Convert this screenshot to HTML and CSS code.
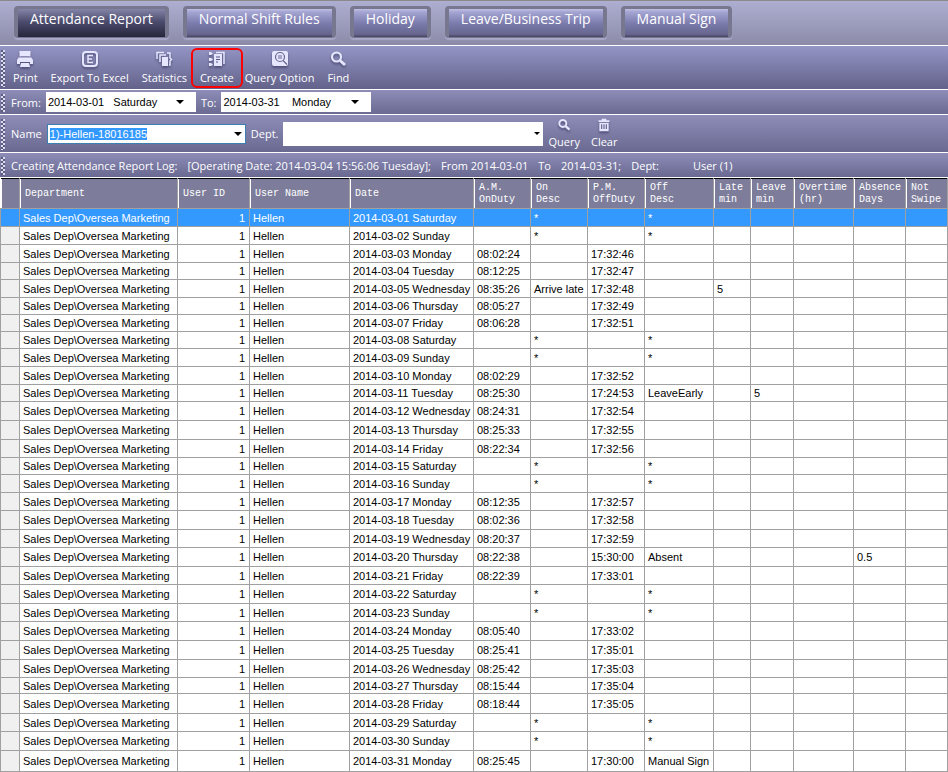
FILE: index.html
```html
<!DOCTYPE html>
<html lang="en">
<head>
  <meta charset="UTF-8">
  <title>Attendance Report</title>
  <meta name="viewport" content="width=device-width, initial-scale=1">
  <link rel="stylesheet" href="styles.css">
</head>
<body>
  <nav class="tabs">
    <button type="button" class="tab active">Attendance Report</button>
    <button type="button" class="tab">Normal Shift Rules</button>
    <button type="button" class="tab">Holiday</button>
    <button type="button" class="tab">Leave/Business Trip</button>
    <button type="button" class="tab">Manual Sign</button>
  </nav>

  <div class="bar toolbar">
    <button type="button" class="tool">
      <svg class="icon" viewBox="0 0 18 18"><path d="M4 1h10v5H4z"/><path d="M3 7h12l2 3v4h-3v-2H4v2H1v-4z"/><path d="M5 13h8l1 4H4z"/><path d="M4 1v6h10V1" fill="none" stroke="#e6e6ff"/><path d="M3 7h12" stroke="#7d7da8"/></svg>
      Print
    </button>
    <button type="button" class="tool">
      <svg class="icon" viewBox="0 0 18 18"><rect x="2" y="2" width="14" height="14" rx="3" fill="none" stroke="#e6e6ff" stroke-width="2"/><path d="M12 5.500H7v7h5M7 9h4" fill="none" stroke="#e6e6ff" stroke-width="1.500"/></svg>
      Export To Excel
    </button>
    <button type="button" class="tool">
      <svg class="icon" viewBox="0 0 18 18"><path d="M2 9V2.500h7M5 12V5h6" fill="none" stroke="#e6e6ff" stroke-width="1.500"/><path d="M7 7h6v9H7z"/><path d="M12 3h3v5l1.500 1.500L15 11v4h-1" fill="none" stroke="#e6e6ff" stroke-width="1.500"/></svg>
      Statistics
    </button>
    <button type="button" class="tool marked">
      <svg class="icon" viewBox="0 0 18 18"><path d="M6 4h8v12H6z"/><path d="M8 2.500h8V14" fill="none" stroke="#e6e6ff" stroke-width="1.500"/><path d="M1 2h2l2 1.500L3 5H1zM1 8h2l2 1.500L3 11H1zM1 13h2l2 1.500L3 16H1z"/><path d="M8 7h4M8 9.500h4M8 12h2" stroke="#55558a"/></svg>
      Create
    </button>
    <button type="button" class="tool">
      <svg class="icon" viewBox="0 0 18 18"><rect x="1" y="1" width="16" height="15" rx="2"/><circle cx="9" cy="7" r="4.500" fill="none" stroke="#66668f" stroke-width="1.200"/><path d="M7 6h4M7 8h4M12 10.500l4 4" stroke="#66668f" stroke-width="1.200"/></svg>
      Query Option
    </button>
    <button type="button" class="tool">
      <svg class="icon" viewBox="0 0 18 18"><circle cx="7.500" cy="7" r="4.500" fill="none" stroke="#e6e6ff" stroke-width="2.200"/><path d="M11 10.500l5 4.500" stroke="#e6e6ff" stroke-width="3"/></svg>
      Find
    </button>
  </div>

  <div class="bar dates">
    <label for="from">From:</label>
    <select id="from" class="field date"><option>2014-03-01 &nbsp; Saturday</option></select>
    <label for="to">To:</label>
    <select id="to" class="field date"><option>2014-03-31 &nbsp; &nbsp;Monday</option></select>
  </div>

  <div class="bar search">
    <label for="name">Name</label>
    <input id="name" class="field person" type="text" value="1)-Hellen-18016185" role="combobox" aria-expanded="false">
    <label for="dept">Dept.</label>
    <select id="dept" class="field dept"><option></option></select>
    <div class="actions">
      <button type="button" class="tool small">
        <svg class="icon" viewBox="0 0 18 18"><circle cx="7.500" cy="7" r="4.500" fill="none" stroke="#e6e6ff" stroke-width="2.500"/><path d="M11 10.500l5 4.500" stroke="#e6e6ff" stroke-width="3"/></svg>
        Query
      </button>
      <button type="button" class="tool small">
        <svg class="icon" viewBox="0 0 18 18"><path d="M2 3h14v2H2zM6 1h6v2H6zM3 6h12v11H3z"/><path d="M6 8v6M9 8v6M12 8v6" stroke="#66668f" stroke-width="1.500"/></svg>
        Clear
      </button>
    </div>
  </div>

  <div class="bar log">
    <span>Creating Attendance Report Log:</span>
    <span>[Operating Date: 2014-03-04 15:56:06 Tuesday];</span>
    <span>From 2014-03-01</span>
    <span>To</span>
    <span>2014-03-31;</span>
    <span class="log-dept">Dept:</span>
    <span>User (1)</span>
  </div>

  <table class="report">
    <colgroup>
      <col class="c-mark"><col class="c-dept"><col class="c-id"><col class="c-name"><col class="c-date">
      <col class="c-time"><col class="c-time"><col class="c-time"><col class="c-off"><col class="c-late">
      <col class="c-leave"><col class="c-over"><col class="c-abs"><col>
    </colgroup>
    <thead>
      <tr>
        <th></th><th>Department</th><th>User ID</th><th>User Name</th><th>Date</th>
        <th>A.M.<br>OnDuty</th><th>On<br>Desc</th><th>P.M.<br>OffDuty</th><th>Off<br>Desc</th>
        <th>Late<br>min</th><th>Leave<br>min</th><th>Overtime<br>(hr)</th><th>Absence<br>Days</th><th>Not<br>Swipe</th>
      </tr>
    </thead>
    <tbody id="rows"></tbody>
  </table>
  <script src="script.js"></script>
</body>
</html>
```
FILE: styles.css
```css
body {
  margin: 0;
  background: #fff;
  font-family: "Open Sans", "Noto Sans", sans-serif;
  font-size: 11px;
  color: #fff;
}
button {
  font: inherit;
  color: inherit;
}

/* top tabs */
.tabs {
  display: flex;
  gap: 14px;
  height: 45px;
  box-sizing: border-box;
  padding: 5px 14px 0;
  border-top: 1px solid #8a8a8a;
  background: linear-gradient(#aeaed2, #8b8ba8);
}
.tab {
  height: 32px;
  padding: 0 12px 8px;
  border: 4px solid #77778f;
  border-top-width: 3px;
  border-bottom: 1px solid #77778f;
  border-radius: 4px;
  background: linear-gradient(#c0c0e4, #a6a6d4 10%, #7c7cae 50%, #66668f 90%, #44445f);
  box-shadow: 0 2px 1px #a8a8c8;
  font-size: 14px;
  line-height: 18px;
  white-space: nowrap;
}
.tab.active {
  background: linear-gradient(#8484a8, #4c4c6e 45%, #26263c);
}

/* tool bars */
.bar {
  display: flex;
  align-items: center;
  box-sizing: border-box;
  position: relative;
  padding-left: 11px;
  border-top: 1px solid #fff;
  background: linear-gradient(#8d8db8, #696991);
  white-space: nowrap;
}
/* dotted grip on the left of every bar */
.bar::before {
  content: "";
  position: absolute;
  left: 1px;
  top: 4px;
  bottom: 2px;
  width: 4px;
  background: repeating-conic-gradient(#dcdcf0 0 25%, #5c5c80 0 50%) 0 0 / 4px 4px;
}
.toolbar {
  height: 44px;
  gap: 13px;
  padding-left: 13px;
  background: linear-gradient(#9595c6, #62628a);
}
.tool {
  display: flex;
  flex-direction: column;
  align-items: center;
  gap: 2px;
  padding: 0;
  border: 0;
  background: none;
  line-height: 16px;
}
.icon {
  width: 18px;
  height: 18px;
  fill: #e6e6ff;
  filter: drop-shadow(0 2px 1px #50507a);
}
.small .icon {
  width: 14px;
  height: 14px;
}
.marked {
  margin: 0 -11px 0 -9px;
  padding: 0 7px;
  border: 2px solid #f00;
  border-radius: 6px;
}
.dates {
  height: 25px;
  gap: 5px;
}
.search {
  height: 38px;
  gap: 5px;
}
.actions {
  display: flex;
  gap: 11px;
}
.log {
  height: 26px;
  gap: 10px;
  border-bottom: 1px solid #fff;
}
.log-dept {
  margin-right: 24px;
}

/* fields */
.field {
  height: 20px;
  box-sizing: border-box;
  padding: 0 0 0 2px;
  border: 0;
  border-radius: 0;
  outline: 0;
  appearance: none;
  background: #fff url("data:image/svg+xml,%3Csvg xmlns='http://www.w3.org/2000/svg' width='8' height='4'%3E%3Cpath d='M0 0h8L4 4z'/%3E%3C/svg%3E") no-repeat right 12px center;
  color: #000;
  font-family: "Liberation Sans", Arial, sans-serif;
  font-size: 11px;
}
.date {
  width: 150px;
}
.person {
  width: 199px;
  border: 1px solid #3c7fb1;
  background-position: right 3px center;
}
.person::selection {
  background: #39f;
  color: #fff;
}
.dept {
  width: 260px;
  height: 24px;
  background-size: 6px 3px;
  background-position: right 3px center;
}

/* report grid */
.report {
  width: 100%;
  border-collapse: collapse;
  table-layout: fixed;
  border-top: 1px solid #000;
  color: #000;
  font-family: "Liberation Sans", Arial, sans-serif;
  font-size: 11px;
  line-height: 14px;
}
.c-mark { width: 19px; }
.c-dept { width: 158px; }
.c-id { width: 72px; }
.c-name { width: 100px; }
.c-date { width: 124px; }
.c-time { width: 57px; }
.c-off { width: 69px; }
.c-late { width: 37px; }
.c-leave { width: 43px; }
.c-over { width: 60px; }
.c-abs { width: 52px; }
.report th {
  height: 28px;
  padding: 1px 0 0 5px;
  border-right: 1px solid #a0a0a0;
  background: linear-gradient(#fff, #fff) left / 1px 100% no-repeat #7d7d9b;
  color: #fff;
  font-family: "Liberation Mono", "Courier New", monospace;
  font-size: 10px;
  font-weight: 400;
  line-height: 12px;
  text-align: left;
}
.report td {
  padding: 0 3px;
  border: 1px solid #a0a0a0;
  white-space: nowrap;
}
.report td:first-child {
  background: #f0f0f0;
}
.report td:nth-child(3) {
  text-align: right;
  padding-right: 4px;
}
.report tr.selected td {
  background: #39f;
  color: #fff;
}
```
FILE: script.js
```js
// row height, date, on duty, on desc, off duty, off desc, late, leave, overtime, absence, not swipe
const records = [
  [18, '2014-03-01 Saturday', '', '*', '', '*'],
  [18, '2014-03-02 Sunday', '', '*', '', '*'],
  [18, '2014-03-03 Monday', '08:02:24', '', '17:32:46'],
  [17, '2014-03-04 Tuesday', '08:12:25', '', '17:32:47'],
  [18, '2014-03-05 Wednesday', '08:35:26', 'Arrive late', '17:32:48', '', '5'],
  [17, '2014-03-06 Thursday', '08:05:27', '', '17:32:49'],
  [17, '2014-03-07 Friday', '08:06:28', '', '17:32:51'],
  [17, '2014-03-08 Saturday', '', '*', '', '*'],
  [18, '2014-03-09 Sunday', '', '*', '', '*'],
  [18, '2014-03-10 Monday', '08:02:29', '', '17:32:52'],
  [17, '2014-03-11 Tuesday', '08:25:30', '', '17:24:53', 'LeaveEarly', '', '5'],
  [19, '2014-03-12 Wednesday', '08:24:31', '', '17:32:54'],
  [19, '2014-03-13 Thursday', '08:25:33', '', '17:32:55'],
  [18, '2014-03-14 Friday', '08:22:34', '', '17:32:56'],
  [17, '2014-03-15 Saturday', '', '*', '', '*'],
  [18, '2014-03-16 Sunday', '', '*', '', '*'],
  [18, '2014-03-17 Monday', '08:12:35', '', '17:32:57'],
  [19, '2014-03-18 Tuesday', '08:02:36', '', '17:32:58'],
  [18, '2014-03-19 Wednesday', '08:20:37', '', '17:32:59'],
  [19, '2014-03-20 Thursday', '08:22:38', '', '15:30:00', 'Absent', '', '', '', '0.5'],
  [18, '2014-03-21 Friday', '08:22:39', '', '17:33:01'],
  [19, '2014-03-22 Saturday', '', '*', '', '*'],
  [18, '2014-03-23 Sunday', '', '*', '', '*'],
  [19, '2014-03-24 Monday', '08:05:40', '', '17:33:02'],
  [19, '2014-03-25 Tuesday', '08:25:41', '', '17:35:01'],
  [18, '2014-03-26 Wednesday', '08:25:42', '', '17:35:03'],
  [16, '2014-03-27 Thursday', '08:15:44', '', '17:35:04'],
  [20, '2014-03-28 Friday', '08:18:44', '', '17:35:05'],
  [18, '2014-03-29 Saturday', '', '*', '', '*'],
  [19, '2014-03-30 Sunday', '', '*', '', '*'],
  [21, '2014-03-31 Monday', '08:25:45', '', '17:30:00', 'Manual Sign']
];

const tbody = document.getElementById('rows');

records.forEach(([height, ...cells], index) => {
  const tr = tbody.insertRow();
  tr.style.height = `${height}px`;
  if (index === 0) tr.className = 'selected';
  const values = ['', 'Sales Dep\\Oversea Marketing', '1', 'Hellen', ...cells];
  for (let i = 0; i < 14; i++) {
    tr.insertCell().textContent = values[i] || '';
  }
});

// the name box opens focused with its text selected
const nameInput = document.getElementById('name');
nameInput.focus();
nameInput.select();
```
